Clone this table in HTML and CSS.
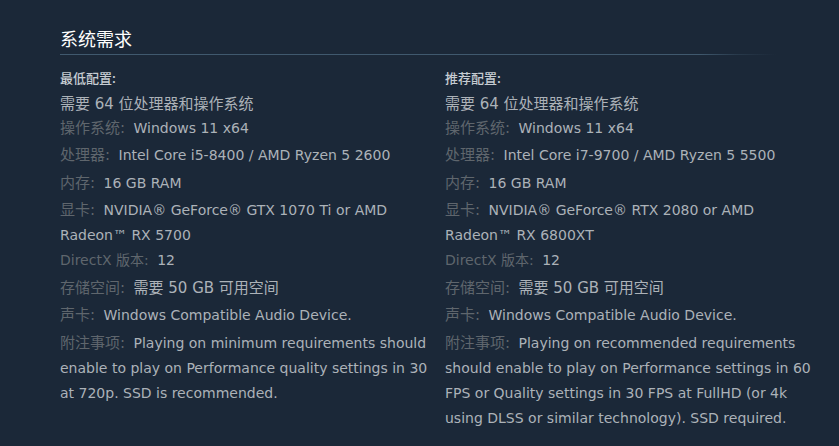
FILE: index.html
```html
<!DOCTYPE html>
<html lang="zh-CN">
<head>
<meta charset="utf-8">
<title>系统需求</title>
<link rel="stylesheet" href="styles.css">
</head>
<body>
<div class="page">
  <section class="sysreq">
    <h2 class="title">系统需求</h2>
    <div class="cols">
      <div class="col">
        <div class="col-head">最低配置:</div>
        <ul class="reqs">
          <li class="plain"><span class="cjk">需要 64 位处理器和操作系统</span></li>
          <li><span class="lbl">操作系统:</span> Windows 11 x64</li>
          <li><span class="lbl">处理器:</span> Intel Core i5-8400 / AMD Ryzen 5 2600</li>
          <li><span class="lbl">内存:</span> 16 GB RAM</li>
          <li class="wrapped"><span class="lbl">显卡:</span> NVIDIA® GeForce® GTX 1070 Ti or AMD Radeon™ RX 5700</li>
          <li><span class="lbl lbl-latin">DirectX 版本:</span> 12</li>
          <li><span class="lbl">存储空间:</span> <span class="cjk">需要 50 GB 可用空间</span></li>
          <li><span class="lbl">声卡:</span> Windows Compatible Audio Device.</li>
          <li><span class="lbl">附注事项:</span> Playing on minimum requirements should enable to play on Performance quality settings in 30 at 720p. SSD is recommended.</li>
        </ul>
      </div>
      <div class="col">
        <div class="col-head">推荐配置:</div>
        <ul class="reqs">
          <li class="plain"><span class="cjk">需要 64 位处理器和操作系统</span></li>
          <li><span class="lbl">操作系统:</span> Windows 11 x64</li>
          <li><span class="lbl">处理器:</span> Intel Core i7-9700 / AMD Ryzen 5 5500</li>
          <li><span class="lbl">内存:</span> 16 GB RAM</li>
          <li class="wrapped"><span class="lbl">显卡:</span> NVIDIA® GeForce® RTX 2080 or AMD Radeon™ RX 6800XT</li>
          <li><span class="lbl lbl-latin">DirectX 版本:</span> 12</li>
          <li><span class="lbl">存储空间:</span> <span class="cjk">需要 50 GB 可用空间</span></li>
          <li><span class="lbl">声卡:</span> Windows Compatible Audio Device.</li>
          <li><span class="lbl">附注事项:</span> Playing on recommended requirements should enable to play on Performance settings in 60 FPS or Quality settings in 30 FPS at FullHD (or 4k using DLSS or similar technology). SSD required.</li>
        </ul>
      </div>
    </div>
  </section>
</div>
</body>
</html>
```

FILE: styles.css
```css
html, body {
  margin: 0;
  padding: 0;
  background: #1b2838;
}
body {
  font-family: "DejaVu Sans", "Noto Sans CJK SC", sans-serif;
  color: #acb2b8;
}
.page {
  padding: 26px 0 0 60px;
}
.sysreq {
  width: 770px;
}
.title {
  margin: 0;
  font-family: "Noto Sans CJK SC", sans-serif;
  font-size: 18px;
  line-height: 24px;
  font-weight: normal;
  color: #ffffff;
  padding-bottom: 5px;
  background-image: linear-gradient(to right, #40596e 0%, #40596e 83%, rgba(64, 89, 110, 0.35) 88%, rgba(64, 89, 110, 0) 93%);
  background-size: 100% 1px;
  background-repeat: no-repeat;
  background-position: left bottom;
}
.cols {
  display: grid;
  grid-template-columns: 380px 380px;
  column-gap: 5px;
  margin-top: 14px;
}
.col-head {
  font-family: "Noto Sans CJK SC", sans-serif;
  font-size: 13px;
  line-height: 18px;
  font-weight: 500;
  color: #c6ccd2;
  margin-bottom: 5px;
}
.reqs {
  list-style: none;
  margin: 0;
  padding: 0;
  font-size: 14px;
  line-height: 25px;
}
.reqs li {
  margin-top: 2.5px;
}
.reqs li.plain {
  margin-top: 0;
}
.reqs li.plain + li {
  margin-top: -1.5px;
}
.reqs li.wrapped + li {
  margin-top: 0;
}
.lbl {
  color: #5f666d;
  font-size: 15px;
  line-height: 15px;
  margin-right: 4px;
}
.lbl-latin {
  font-size: 14px;
}
.cjk {
  font-size: 15px;
  line-height: 15px;
}
```
